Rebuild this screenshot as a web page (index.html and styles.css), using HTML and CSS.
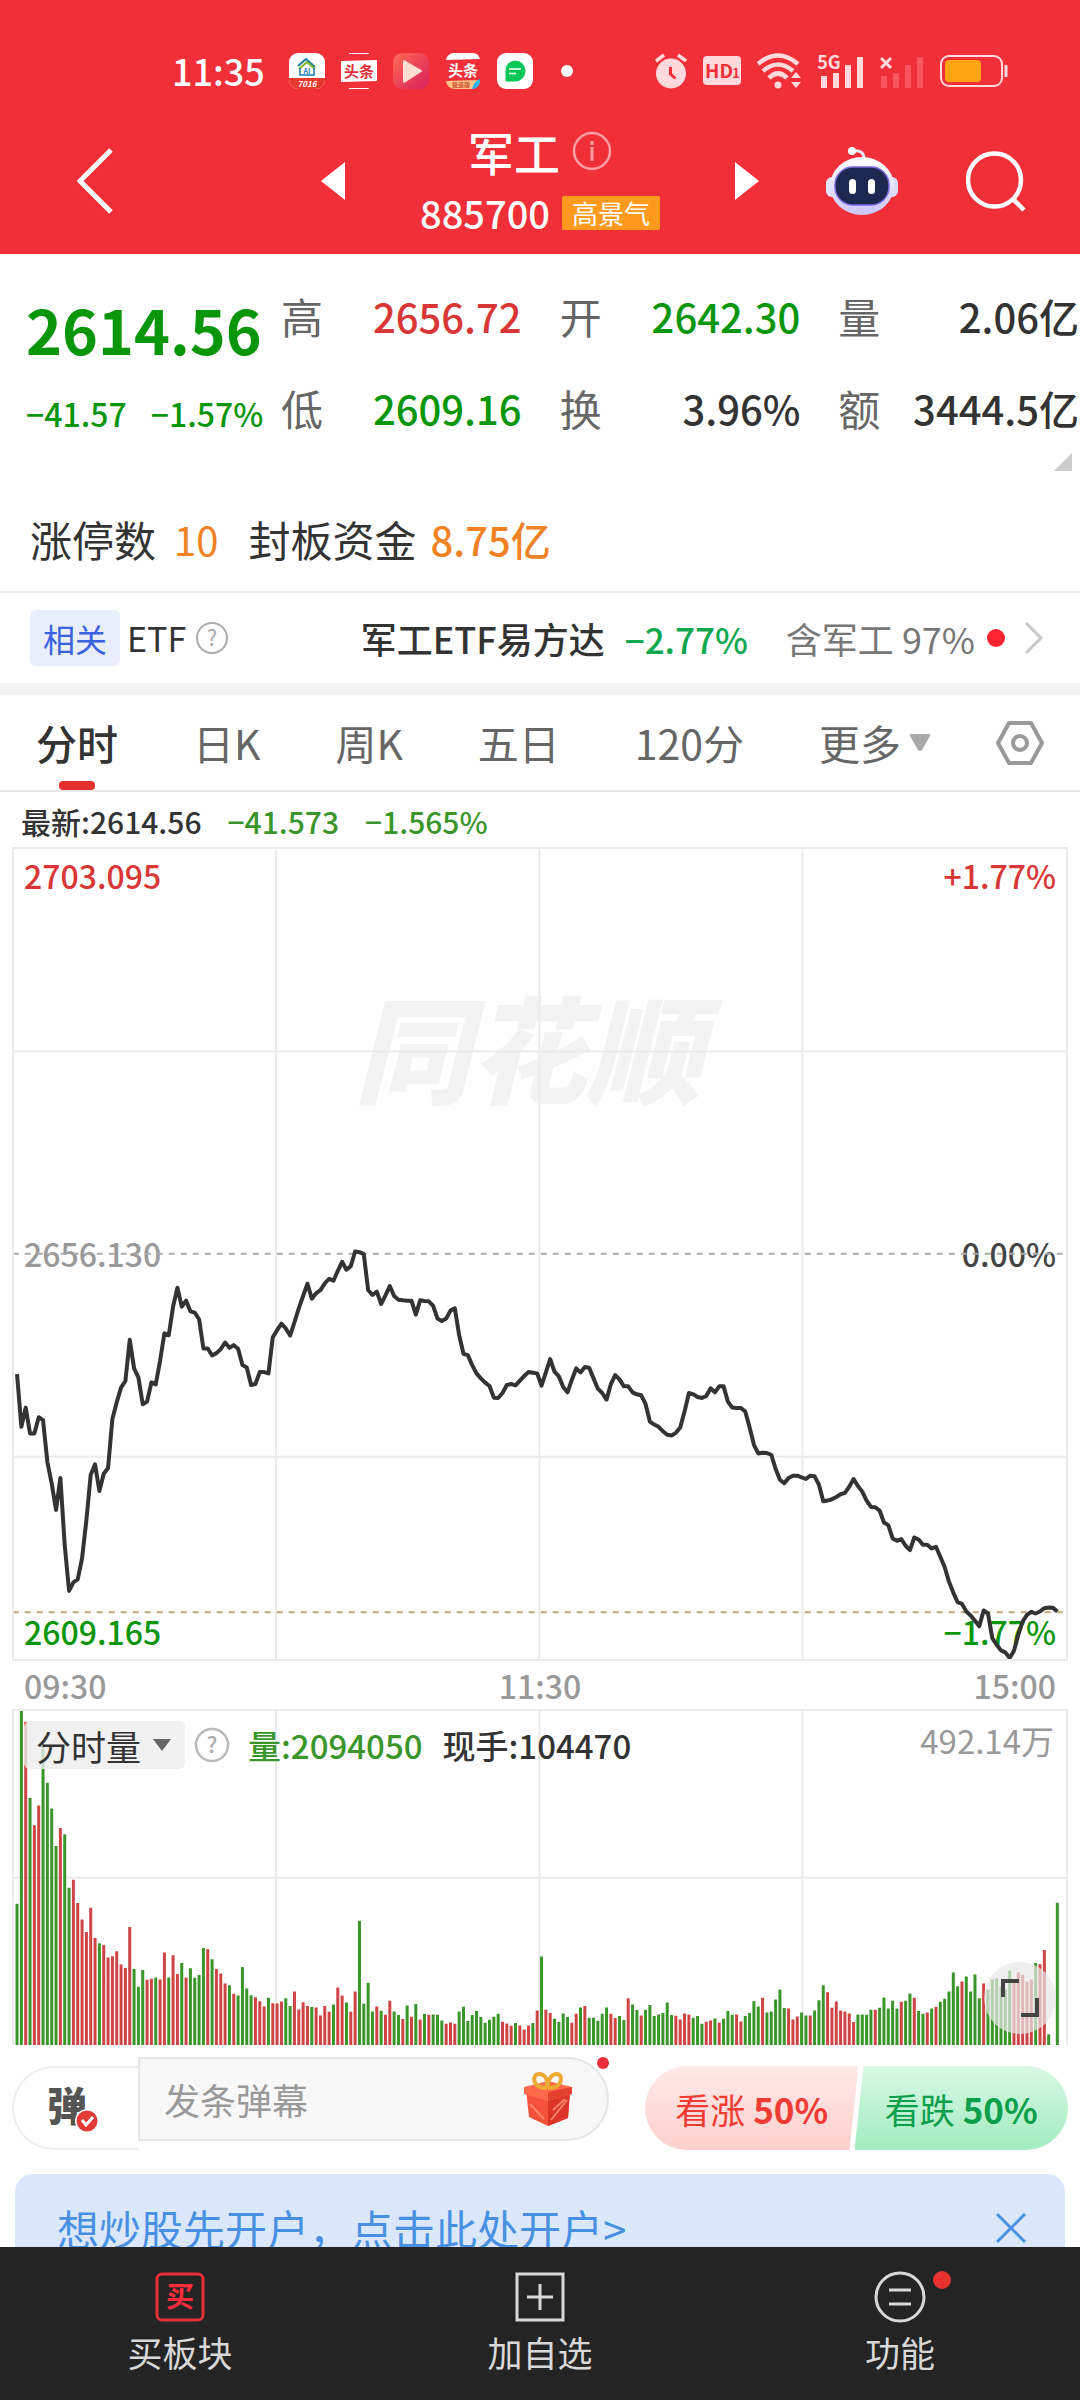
FILE: index.html
```
<!DOCTYPE html>
<html lang="zh-CN">
<head>
    <meta charset="utf-8">
    <meta name="viewport" content="width=device-width, initial-scale=1">
    <title>军工 885700</title>
    <link rel="stylesheet" href="styles.css">
</head>
<body>
    <header class="header">
        <div class="status-bar">
            <span class="clock">11:35</span>
            <div class="status-apps">
                <svg class="app-icon" viewBox="0 0 36 36">
                    <rect width="36" height="36" rx="9" fill="#fff"/>
                    <path d="M0 25h36v2a9 9 0 0 1-9 9H9a9 9 0 0 1-9-9z" fill="#e8392f"/>
                    <path d="M9 13l8-7 9 8" fill="none" stroke="#1b7f9c" stroke-width="2"/>
                    <path d="M10 16l8-7 8 7" fill="none" stroke="#7db52d" stroke-width="2"/>
                    <path d="M11 15v7h14v-7" fill="none" stroke="#1779b8" stroke-width="1.5"/>
                    <text x="18" y="21" class="app-text" font-size="7" fill="#1779b8">AI</text>
                    <text x="18" y="34" class="app-text" font-size="8" font-style="italic" fill="#fff">7016</text>
                </svg>
                <svg class="app-icon" viewBox="0 0 36 36">
                    <path d="M8 .5h20M8 35.500h20" stroke="#fff"/>
                    <path d="M0 8l36-1v21l-36 1z" fill="#fff"/>
                    <text x="18" y="24" class="app-text" font-size="15" fill="#e0313a">头条</text>
                </svg>
                <svg class="app-icon" viewBox="0 0 36 36">
                    <defs>
                        <linearGradient id="playBg" x1="0" y1="0" x2="1" y2="1">
                            <stop offset="0" stop-color="#ff6b55"/>
                            <stop offset="1" stop-color="#d81f5c"/>
                        </linearGradient>
                    </defs>
                    <rect width="36" height="36" rx="9" fill="url(#playBg)"/>
                    <path d="M11 8l17 10-17 11z" fill="#ffdcd0" stroke="#ffdcd0" stroke-width="2" stroke-linejoin="round"/>
                </svg>
                <svg class="app-icon" viewBox="0 0 36 36">
                    <path d="M1 7a8 8 0 0 1 8-7h18a8 8 0 0 1 8 6z" fill="#fff"/>
                    <path d="M1 28l34-1a9 9 0 0 1-8 9H9a9 9 0 0 1-8-8z" fill="#ffc48a"/>
                    <path d="M35 26v3a8 8 0 0 1-8 7c1-5 4-8 8-10z" fill="#2db4e8"/>
                    <text x="18" y="23" class="app-text" font-size="15" fill="#fff">头条</text>
                    <text x="16" y="34" class="app-text" font-size="6" fill="#c8502a">极速版</text>
                </svg>
                <svg class="app-icon" viewBox="0 0 36 36">
                    <rect width="36" height="36" rx="9" fill="#fff"/>
                    <path d="M18 7.500a10.500 10.500 0 1 1 0 21H8.500V18A10 10 0 0 1 18 7.500z" fill="#06c755"/>
                    <path d="M12 16h12M12 20.500h7" stroke="#fff" stroke-width="1.500"/>
                </svg>
                <span class="more-dot"></span>
            </div>
            <div class="status-system">
                <svg width="32" height="36" viewBox="0 0 32 36">
                    <circle cx="16" cy="20.500" r="15" fill="#ffd9db"/>
                    <path d="M1 8l8-6M31 8l-8-6" stroke="#ffd9db" stroke-width="3.500"/>
                    <path d="M15.500 14v7l5 4.500" fill="none" stroke="#f12f38" stroke-width="3"/>
                </svg>
                <svg width="38" height="30" viewBox="0 0 38 30">
                    <rect width="38" height="29" rx="4" fill="#ffd9db"/>
                    <text x="16" y="22" class="app-text" font-size="19" fill="#f12f38">HD</text>
                    <text x="33" y="22" class="app-text" font-size="13" fill="#f12f38">1</text>
                </svg>
                <svg width="44" height="36" viewBox="0 0 44 36">
                    <g fill="none" stroke="#ffd9db" stroke-width="4.500">
                        <path d="M1 11q20-17 40 0"/>
                        <path d="M6 18q15-13 30 0"/>
                        <path d="M12 25q9-9 18 0"/>
                    </g>
                    <circle cx="21" cy="32" r="3.500" fill="#ffd9db"/>
                    <path d="M34 25l5-6 5 6zM34 29l5 6 5-6z" fill="#ffd9db"/>
                </svg>
                <svg class="signal" width="47" height="36" viewBox="0 0 47 36">
                    <text x="12" y="16" class="app-text" font-size="18" fill="#ffd9db">5G</text>
                    <path d="M7 35V23M19 35V20M31 35V12M43 35V4" stroke="#ffd9db" stroke-width="6"/>
                </svg>
                <svg width="44" height="36" viewBox="0 0 44 36">
                    <path d="M1 5l10 10M11 5l-10 10" stroke="#ffd9db" stroke-width="3"/>
                    <path d="M4 35V23M16 35V20M28 35V12M40 35V4" stroke="#f8565f" stroke-width="6"/>
                </svg>
                <svg width="68" height="34" viewBox="0 0 68 34">
                    <rect x="1" y="2" width="61" height="30" rx="8" fill="none" stroke="#ffd9db" stroke-width="2"/>
                    <rect x="5" y="6" width="36" height="22" rx="4" fill="#ffa412"/>
                    <path d="M66 11v12" stroke="#ffd9db" stroke-width="3"/>
                </svg>
            </div>
        </div>
        <div class="title-bar">
            <div class="title-side">
                <button class="icon-btn" aria-label="返回">
                    <svg width="36" height="66" viewBox="0 0 36 66"><path d="M34 2L3 33l31 31" fill="none" stroke="#fff" stroke-width="5"/></svg>
                </button>
                <button class="icon-btn" aria-label="上一个">
                    <svg width="24" height="38" viewBox="0 0 24 38"><path d="M24 0v38L0 19z" fill="#fff"/></svg>
                </button>
            </div>
            <div class="title-center">
                <div class="title-name">
                    <h1>军工</h1>
                    <svg width="40" height="40" viewBox="0 0 40 40">
                        <circle cx="20" cy="20" r="18" fill="none" stroke="#ff9da2" stroke-width="2.500"/>
                        <path d="M20 16v14M20 10v4" stroke="#ff9da2" stroke-width="3"/>
                    </svg>
                </div>
                <div class="title-code">
                    <span>885700</span>
                    <span class="hot-tag">高景气</span>
                </div>
            </div>
            <div class="title-side">
                <button class="icon-btn" aria-label="下一个">
                    <svg width="24" height="38" viewBox="0 0 24 38"><path d="M0 0v38l24-19z" fill="#fff"/></svg>
                </button>
                <button class="icon-btn" aria-label="智能助手">
                    <svg width="72" height="70" viewBox="0 0 72 70">
                        <defs>
                            <linearGradient id="botShell" x1="0" y1="0" x2="0" y2="1">
                                <stop offset="0" stop-color="#fff"/>
                                <stop offset="1" stop-color="#c9c6fa"/>
                            </linearGradient>
                        </defs>
                        <path d="M26 5q12-2 12 8" fill="none" stroke="#efeaff" stroke-width="3"/>
                        <circle cx="26" cy="5" r="4" fill="#fff"/>
                        <rect x="0" y="31" width="12" height="20" rx="6" fill="#e4e4fb"/>
                        <rect x="60" y="31" width="12" height="20" rx="6" fill="#dcdcfa"/>
                        <ellipse cx="36" cy="40" rx="32" ry="29" fill="url(#botShell)"/>
                        <rect x="9" y="21" width="54" height="38" rx="18" fill="#1c2850" stroke="#7b6ae0" stroke-width="1.500"/>
                        <rect x="23" y="33" width="7" height="15" rx="3.500" fill="#fff"/>
                        <rect x="42" y="33" width="7" height="15" rx="3.500" fill="#fff"/>
                    </svg>
                </button>
                <button class="icon-btn" aria-label="搜索">
                    <svg width="60" height="62" viewBox="0 0 60 62">
                        <circle cx="28.500" cy="30" r="26.500" fill="none" stroke="#fff" stroke-width="4.500"/>
                        <path d="M47 49l11 11" stroke="#fff" stroke-width="4.500"/>
                    </svg>
                </button>
            </div>
        </div>
    </header>

    <main class="content">
        <section class="quote">
            <div class="price down">
                <div class="price-now">2614.56</div>
                <div class="price-change"><span>−41.57</span><span>−1.57%</span></div>
            </div>
            <dl class="stats">
                <div class="stat"><dt>高</dt><dd class="up">2656.72</dd></div>
                <div class="stat"><dt>开</dt><dd class="down">2642.30</dd></div>
                <div class="stat"><dt>量</dt><dd>2.06亿</dd></div>
                <div class="stat"><dt>低</dt><dd class="down">2609.16</dd></div>
                <div class="stat"><dt>换</dt><dd>3.96%</dd></div>
                <div class="stat"><dt>额</dt><dd>3444.5亿</dd></div>
            </dl>
        </section>
        <div class="expand-corner">
            <svg width="18" height="18" viewBox="0 0 18 18"><path d="M18 0v18H0z" fill="#ccc"/></svg>
        </div>

        <section class="limit-row">
            <span>涨停数</span><span class="orange">10</span>
            <span class="limit-label">封板资金</span><b class="orange">8.75亿</b>
        </section>

        <a class="etf-row" href="#etf">
            <span class="etf-tag">相关</span>
            <span class="etf-label">ETF</span>
            <svg width="34" height="34" viewBox="0 0 34 34">
                <circle cx="17" cy="17" r="15" fill="none" stroke="#aaa" stroke-width="2"/>
                <text x="17" y="25" class="help-mark">?</text>
            </svg>
            <span class="etf-name">军工ETF易方达</span>
            <span class="etf-change">−2.77%</span>
            <span class="etf-share">含军工 97%</span>
            <span class="red-dot"></span>
            <svg class="etf-arrow" width="20" height="34" viewBox="0 0 20 34"><path d="M2 2l15 15L2 32" fill="none" stroke="#c8c8c8" stroke-width="3"/></svg>
        </a>

        <nav class="tabs">
            <button class="tab active">分时</button>
            <button class="tab">日K</button>
            <button class="tab">周K</button>
            <button class="tab">五日</button>
            <button class="tab">120分</button>
            <button class="tab tab-more">更多
                <svg width="22" height="20" viewBox="0 0 22 20"><path d="M2 1h18q2 0 1 2l-8 14q-2 2-4 0L1 3q-1-2 1-2z" fill="#aaa"/></svg>
            </button>
            <button class="tab" aria-label="设置">
                <svg width="48" height="46" viewBox="0 0 48 46">
                    <path d="M13 3h22l11 20-11 20H13L2 23z" fill="none" stroke="#999" stroke-width="4" stroke-linejoin="round"/>
                    <circle cx="24" cy="23" r="7" fill="none" stroke="#999" stroke-width="4"/>
                </svg>
            </button>
        </nav>

        <div class="latest">
            <span>最新:2614.56</span>
            <span class="green">−41.573</span>
            <span class="green">−1.565%</span>
        </div>

        <section class="price-chart">
            <div class="watermark">同花顺</div>
            <div class="axis-labels">
                <div><span class="up">2703.095</span><span class="up">+1.77%</span></div>
                <div><span class="muted">2656.130</span><span class="flat">0.00%</span></div>
                <div><span class="down">2609.165</span><span class="down">−1.77%</span></div>
            </div>
            <svg class="plot" id="pricePlot" viewBox="-0.7 -1056 242.700 2439" preserveAspectRatio="none">
                <g class="grid">
                    <path d="M59.750-1056V1383M120.500-1056V1383M181.250-1056V1383"/>
                    <path d="M-1-446H242M-1 774H242"/>
                </g>
                <path class="dash" d="M-1 163H242"/>
                <path class="dash dash-last" d="M-1 1242H242"/>
            </svg>
        </section>
        <div class="time-axis"><span>09:30</span><span>11:30</span><span>15:00</span></div>

        <section class="volume-chart">
            <svg class="plot" id="volumePlot" viewBox="-0.7 0 242.700 1005" preserveAspectRatio="none">
                <g class="grid">
                    <path d="M59.750 0V1005M120.500 0V1005M181.250 0V1005M-1 502H242"/>
                </g>
            </svg>
            <div class="volume-bar">
                <button class="volume-pick">分时量
                    <svg width="18" height="12" viewBox="0 0 18 12"><path d="M0 0h18l-9 12z" fill="#666"/></svg>
                </button>
                <svg width="36" height="36" viewBox="0 0 36 36">
                    <circle cx="18" cy="18" r="16" fill="none" stroke="#bbb" stroke-width="2.500"/>
                    <text x="18" y="26" class="help-mark">?</text>
                </svg>
                <span class="green">量:2094050</span>
                <span>现手:104470</span>
                <span class="volume-max">492.14万</span>
            </div>
            <button class="fullscreen" aria-label="全屏">
                <svg width="38" height="38" viewBox="0 0 38 38"><path d="M2 18V2h16M36 19v17H20" fill="none" stroke="#444" stroke-width="4"/></svg>
            </button>
        </section>

        <section class="actions">
            <button class="danmu-toggle" aria-label="弹幕开关">
                <svg width="56" height="56" viewBox="0 0 56 56">
                    <text x="21" y="41" class="danmu-char">弹</text>
                    <circle cx="41" cy="41" r="12" fill="#fff"/>
                    <circle cx="41" cy="41" r="10.500" fill="#e23b38"/>
                    <path d="M36 40l4 5 7-8" fill="none" stroke="#fff" stroke-width="3"/>
                </svg>
            </button>
            <div class="danmu-box">
                <input class="danmu-input" type="text" placeholder="发条弹幕" aria-label="发条弹幕">
                <svg width="50" height="54" viewBox="0 0 50 54">
                    <path d="M3 17l22-4 22 4-2 29-20 8-19-9z" fill="#f4523b"/>
                    <path d="M25 25v29l20-8 2-25z" fill="#dc3427"/>
                    <path d="M1 15l24-6 24 6v7l-24 7-24-7z" fill="#ff6a4d"/>
                    <path d="M25 20l24-5v7l-24 7z" fill="#e5402e"/>
                    <path d="M7 32l14 15M28 48l16-20M30 38l12-11" stroke="#ff846a" stroke-width="2"/>
                    <path d="M24 16C8 16 9 2 16 2s9 7 8 14M25 16c16 0 15-14 9-14s-10 7-9 14" fill="none" stroke="#ecaa35" stroke-width="4"/>
                </svg>
                <span class="danmu-dot"></span>
            </div>
            <div class="vote">
                <button class="vote-btn vote-up">看涨 <b>50%</b></button>
                <button class="vote-btn vote-down">看跌 <b>50%</b></button>
            </div>
        </section>

        <div class="banner">
            <a href="#open">想炒股先开户，点击此处开户&gt;</a>
            <button class="icon-btn" aria-label="关闭">
                <svg width="32" height="32" viewBox="0 0 32 32"><path d="M2 2l28 28M30 2L2 30" stroke="#4a90e2" stroke-width="3"/></svg>
            </button>
        </div>
    </main>

    <nav class="bottom-nav">
        <a href="#buy">
            <svg width="50" height="50" viewBox="0 0 50 50">
                <rect x="2" y="2" width="46" height="46" rx="5" fill="none" stroke="#e5303a" stroke-width="3"/>
                <text x="25" y="35" class="buy-char">买</text>
            </svg>
            买板块
        </a>
        <a href="#add">
            <svg width="50" height="50" viewBox="0 0 50 50">
                <rect x="2" y="2" width="46" height="46" fill="none" stroke="#d8d8d8" stroke-width="3"/>
                <path d="M12 25h26M25 12v26" stroke="#d8d8d8" stroke-width="3"/>
            </svg>
            加自选
        </a>
        <a href="#more">
            <svg class="with-dot" width="50" height="50" viewBox="0 0 50 50">
                <circle cx="25" cy="25" r="24" fill="none" stroke="#d8d8d8" stroke-width="3"/>
                <path d="M14 18h22M14 32h22" stroke="#d8d8d8" stroke-width="3"/>
                <circle cx="67" cy="8" r="9" fill="#e5322f"/>
            </svg>
            功能
        </a>
    </nav>

    <script src="chart.js"></script>
</body>
</html>
```

FILE: styles.css
```
* {
    margin: 0;
    padding: 0;
    box-sizing: border-box;
}

body {
    display: flex;
    flex-direction: column;
    height: 100vh;
    font-family: "Noto Sans CJK SC", "Noto Sans", sans-serif;
    font-size: 34px;
    line-height: 1;
    color: #333;
    background: #fff;
}

button {
    border: none;
    background: none;
    font: inherit;
    color: inherit;
    cursor: pointer;
}

a {
    color: inherit;
    text-decoration: none;
}

svg {
    display: block;
    flex: none;
}

.up {
    color: #d93636;
}

.down {
    color: #0a960a;
}

.green {
    color: #3a962a;
}

.orange {
    color: #f08226;
}

.muted {
    color: #999;
}

.flat {
    color: #444;
}

/* header */

.header {
    flex: none;
    background: #f12f38;
    color: #fff;
}

.status-bar {
    display: flex;
    align-items: center;
    height: 108px;
    padding: 34px 72px 0 172px;
}

.clock {
    padding-bottom: 2px;
    font-size: 36px;
    font-weight: 500;
}

.status-apps {
    display: flex;
    align-items: center;
    gap: 16px;
    margin-left: 24px;
}

.app-icon {
    width: 36px;
    height: 36px;
}

.app-text {
    font-weight: 700;
    text-anchor: middle;
}

.more-dot {
    width: 12px;
    height: 12px;
    margin-left: 12px;
    border-radius: 50%;
    background: #fff;
}

.status-system {
    display: flex;
    align-items: center;
    gap: 16px;
    margin-left: auto;
}

.signal {
    overflow: visible;
}

.title-bar {
    display: grid;
    grid-template-columns: 1fr auto 1fr;
    gap: 75px;
    height: 146px;
}

.title-side {
    display: flex;
    align-items: center;
    justify-content: space-between;
}

.title-side:first-child {
    padding-left: 77px;
}

.title-side:last-child {
    padding-right: 54px;
}

.icon-btn {
    display: flex;
}

.title-center {
    display: flex;
    flex-direction: column;
    align-items: center;
    gap: 20px;
    padding-top: 20px;
}

.title-name {
    display: flex;
    align-items: center;
    gap: 12px;
}

.title-name h1 {
    font-size: 46px;
    font-weight: 500;
}

.title-code {
    display: flex;
    align-items: center;
    gap: 12px;
    font-size: 38px;
    font-weight: 500;
}

.hot-tag {
    padding: 4px 10px;
    border-radius: 2px;
    background: #ff9a1e;
    font-size: 26px;
    font-weight: 400;
}

/* quote */

.content {
    flex: 1;
    min-height: 0;
    overflow: hidden;
}

.quote {
    display: grid;
    grid-template-columns: 255px 1fr;
    padding: 41px 1px 0 26px;
}

.price {
    white-space: nowrap;
}

.price-now {
    font-size: 61px;
    font-weight: 700;
    line-height: 68px;
}

.price-change {
    display: flex;
    gap: 24px;
    margin-top: 34px;
    font-size: 32px;
    font-weight: 500;
}

.stats {
    display: grid;
    grid-template-columns: repeat(3, 1fr);
    gap: 50px 38px;
}

.stat {
    display: flex;
    align-items: center;
    justify-content: space-between;
}

.stat dt {
    font-size: 42px;
    color: #666;
}

.stat dd {
    font-size: 40px;
    font-weight: 500;
    white-space: nowrap;
}

.expand-corner {
    display: flex;
    justify-content: flex-end;
    padding: 24px 8px 0;
}

.limit-row {
    display: flex;
    align-items: center;
    gap: 18px;
    height: 122px;
    padding: 15px 30px 0;
    font-size: 42px;
    border-bottom: 2px solid #eee;
}

.limit-label {
    margin-left: 12px;
}

.limit-row .orange {
    font-size: 40px;
}

.limit-row b {
    margin-left: -4px;
    font-weight: 500;
}

.etf-row {
    display: flex;
    align-items: center;
    height: 102px;
    padding: 0 36px 0 30px;
    border-bottom: 12px solid #f4f4f4;
}

.etf-tag {
    padding: 12px 13px;
    border-radius: 6px;
    background: #e8eefc;
    font-size: 32px;
    color: #3a62e0;
}

.etf-label {
    margin: 0 9px 0 7px;
}

.help-mark {
    font-size: 22px;
    fill: #aaa;
    text-anchor: middle;
}

.etf-name {
    margin-left: auto;
    font-size: 36px;
    font-weight: 500;
}

.etf-change {
    margin: 0 38px 0 20px;
    font-size: 35px;
    font-weight: 500;
    color: #10a84e;
}

.etf-share {
    font-size: 36px;
    color: #777;
}

.red-dot {
    width: 18px;
    height: 18px;
    margin: 0 19px 0 12px;
    border-radius: 50%;
    background: #fc2433;
}

/* tabs */

.tabs {
    display: flex;
    align-items: center;
    justify-content: space-between;
    height: 97px;
    padding: 0 36px;
    border-bottom: 2px solid #e8e8e8;
}

.tab {
    position: relative;
    display: flex;
    align-items: center;
    height: 95px;
    font-size: 41px;
    color: #666;
}

.tab.active {
    font-weight: 500;
    color: #333;
}

.tab.active::after {
    content: "";
    position: absolute;
    left: 50%;
    bottom: 0;
    width: 36px;
    height: 9px;
    margin-left: -18px;
    border-radius: 4px;
    background: #e5302f;
}

.tab-more {
    gap: 8px;
    margin-right: -10px;
}

/* charts */

.latest {
    display: flex;
    align-items: center;
    gap: 26px;
    height: 55px;
    padding: 2px 21px 0;
    font-size: 30px;
    font-weight: 500;
}

.price-chart,
.volume-chart {
    position: relative;
    margin: 0 12px;
    border: 2px solid #ebebeb;
}

.price-chart {
    height: 814px;
}

.volume-chart {
    height: 336px;
    border-bottom: none;
}

.plot {
    position: relative;
    width: 100%;
    height: 100%;
}

.plot path,
.plot polyline {
    fill: none;
    vector-effect: non-scaling-stroke;
}

.grid {
    stroke: #ebebeb;
    stroke-width: 2px;
}

.dash {
    stroke: #aaa;
    stroke-width: 2px;
    stroke-dasharray: 6 6;
}

.dash-last {
    stroke: #bfa77a;
}

.price-line {
    stroke: #333;
    stroke-width: 4px;
    stroke-linejoin: round;
}

.plot .bars-up {
    stroke: #cf4444;
    stroke-width: 3px;
}

.plot .bars-down {
    stroke: #3a962a;
    stroke-width: 3px;
}

.watermark {
    position: absolute;
    top: 25%;
    left: 0;
    right: 0;
    margin-top: -66px;
    padding-right: 24px;
    font-size: 116px;
    font-weight: 900;
    font-style: italic;
    text-align: center;
    color: #f3f3f3;
}

.axis-labels {
    position: absolute;
    inset: 0;
    display: flex;
    flex-direction: column;
    justify-content: space-between;
    padding: 10px 10px 12px 10px;
    font-size: 32px;
    font-weight: 500;
}

.axis-labels div {
    display: flex;
    justify-content: space-between;
}

.time-axis {
    display: flex;
    align-items: center;
    justify-content: space-between;
    height: 48px;
    padding: 0 24px;
    font-size: 32px;
    font-weight: 500;
    color: #999;
}

.volume-bar {
    position: absolute;
    top: 10px;
    left: 10px;
    right: 12px;
    display: flex;
    align-items: center;
    font-size: 33px;
    font-weight: 500;
}

.volume-pick {
    display: flex;
    align-items: center;
    gap: 12px;
    height: 48px;
    padding: 0 14px 0 12px;
    border-radius: 6px;
    background: rgba(238, 238, 238, 0.8);
    font-size: 35px;
    font-weight: 400;
}

.volume-pick + svg {
    margin: 0 18px 0 9px;
}

.volume-bar .green {
    margin-right: 20px;
}

.volume-max {
    margin-left: auto;
    padding-bottom: 10px;
    font-weight: 400;
    color: #999;
}

.fullscreen {
    position: absolute;
    right: 10px;
    bottom: 11px;
    display: grid;
    place-items: center;
    width: 72px;
    height: 72px;
    border-radius: 50%;
    background: rgba(232, 232, 232, 0.7);
}

/* actions */

.actions {
    display: flex;
    align-items: flex-start;
    padding: 12px 12px 24px;
}

.danmu-toggle {
    flex: none;
    display: flex;
    align-items: center;
    width: 126px;
    height: 84px;
    margin-top: 9px;
    padding-left: 32px;
    border: 2px solid #eee;
    border-right: none;
    border-radius: 42px 0 0 42px;
}

.danmu-char {
    font-size: 40px;
    font-weight: 900;
    fill: #555;
    text-anchor: middle;
}

.danmu-box {
    position: relative;
    flex: 1;
    display: flex;
    align-items: center;
    min-width: 0;
    height: 84px;
    margin-right: 36px;
    padding: 0 34px 0 24px;
    border: 2px solid #e6e6e6;
    border-radius: 0 42px 42px 0;
    background: #f8f8f8;
}

.danmu-input {
    flex: 1;
    min-width: 0;
    border: none;
    outline: none;
    background: none;
    font: inherit;
    font-size: 36px;
}

.danmu-input::placeholder {
    color: #999;
}

.danmu-dot {
    position: absolute;
    top: -2px;
    right: -2px;
    width: 12px;
    height: 12px;
    border-radius: 50%;
    background: #e9303a;
}

.vote {
    flex: none;
    display: flex;
    width: 423px;
    margin-top: 9px;
}

.vote-btn {
    flex: 1;
    height: 84px;
    font-size: 35px;
    white-space: nowrap;
}

.vote-up {
    margin-right: -4px;
    border-radius: 42px 0 0 42px;
    background: linear-gradient(#ffeaea, #fdd0cc);
    color: #f03a34;
    clip-path: polygon(0 0, 100% 0, calc(100% - 9px) 100%, 0 100%);
}

.vote-down {
    border-radius: 0 42px 42px 0;
    background: linear-gradient(#daf8e6, #a2ecc0);
    color: #0c9f4b;
    clip-path: polygon(9px 0, 100% 0, 100% 100%, 0 100%);
}

.banner {
    display: flex;
    align-items: center;
    justify-content: space-between;
    height: 108px;
    margin: 0 15px;
    padding: 0 38px 0 42px;
    border-radius: 18px;
    background: #dbe8fb;
    font-size: 42px;
    color: #4a90e2;
}

/* bottom nav */

.bottom-nav {
    flex: none;
    display: grid;
    grid-template-columns: repeat(3, 1fr);
    height: 153px;
    background: #242424;
    color: #d8d8d8;
}

.bottom-nav a {
    display: flex;
    flex-direction: column;
    align-items: center;
    gap: 12px;
    padding-top: 25px;
    font-size: 35px;
}

.with-dot {
    overflow: visible;
}

.buy-char {
    font-size: 28px;
    font-weight: 700;
    fill: #ff2d3c;
    text-anchor: middle;
}
```

FILE: chart.js
```
// 每分钟价格在图中的高度，09:30 - 15:00
const prices = [
    525, 684, 626, 704, 704, 655, 664, 790, 855, 934, 838, 1040, 1178, 1152, 1143, 1080, 965, 828, 797, 877,
    825, 808, 660, 610, 566, 546, 422, 508, 535, 616, 608, 550, 556, 485, 402, 408, 322, 265, 322, 304,
    336, 340, 360, 448, 448, 469, 462, 450, 430, 446, 438, 449, 498, 505, 558, 555, 519, 519, 523, 414,
    393, 373, 388, 409, 369, 327, 290, 253, 298, 282, 272, 252, 238, 244, 214, 187, 211, 200, 156, 158,
    164, 272, 287, 277, 314, 288, 260, 290, 301, 303, 304, 304, 346, 303, 305, 306, 320, 358, 365, 358,
    334, 327, 408, 464, 468, 498, 523, 538, 551, 561, 596, 597, 582, 558, 555, 559, 545, 531, 519, 521,
    523, 560, 520, 480, 518, 532, 564, 580, 542, 508, 520, 504, 506, 538, 569, 582, 602, 555, 528, 541,
    562, 562, 580, 586, 589, 615, 668, 677, 684, 697, 708, 710, 702, 686, 638, 582, 586, 594, 597, 591,
    568, 580, 562, 562, 608, 626, 627, 627, 638, 685, 738, 764, 762, 763, 768, 810, 843, 854, 838, 831,
    831, 836, 841, 831, 833, 858, 908, 906, 902, 895, 887, 883, 864, 841, 862, 879, 906, 925, 926, 936,
    972, 980, 1020, 1027, 1022, 1042, 1055, 1017, 1023, 1039, 1039, 1050, 1045, 1075, 1106, 1150, 1183, 1212, 1217, 1240,
    1252, 1268, 1284, 1237, 1246, 1320, 1340, 1357, 1363, 1380, 1358, 1310, 1270, 1250, 1241, 1246, 1240, 1230, 1228, 1229,
    1240
];

// 每分钟成交量，r 涨 g 跌
const volumes = `
    425g 1005g 973r 743g 661r 721r 900g 789g 712g 599g 653r 634g 473g 497r 427r 378r 340r 413r 322r 306g
    301r 263r 267r 282r 242r 232r 355r 229g 175g 226g 196r 199r 203g 197r 278r 203g 270r 214r 247g 203r
    231g 202g 211g 292g 288r 258g 229r 215r 185r 180g 154r 149g 235g 170g 150g 144r 132r 116r 142g 126r
    125r 131r 141g 117g 161r 107r 129r 117r 114g 113r 89r 117r 100r 122g 173r 149r 128g 100r 161r 374g
    124g 187g 101g 116r 103g 91r 133r 101g 90g 78r 119g 85r 123g 77r 93g 91r 92g 91g 74g 64r
    68r 64r 101g 115g 72g 90g 102g 84g 67g 76g 85g 94g 70r 65r 58r 66g 59r 47r 59r 66g
    104r 266g 106r 96r 79g 69g 95g 84g 67r 94r 113g 117r 82g 82g 73g 94g 113g 94r 81r 87g
    75g 141r 122g 105g 89r 106g 120g 87g 92g 96g 128g 90g 88r 77r 95r 92r 82g 87g 64g 70r
    74r 80g 67r 79g 102g 91g 92r 71r 87g 96g 132g 116g 142r 98g 101g 137g 167g 111g 110r 77r
    86r 98g 89g 89r 104g 135g 180g 159r 112r 131r 104r 101r 95r 69r 92g 92g 91g 106g 106r 112g
    143g 110g 133g 110g 130r 133g 155g 142r 102g 94g 98r 110g 115r 130g 139g 161g 218g 177g 191r 206g
    161g 212g 141g 185r 167g 197g 200g 177g 167g 224g 197r 218r 211r 191r 197r 247g 243r 286r 32g 0g
    428g
`.trim().split(/\s+/);

const SVG_NS = 'http://www.w3.org/2000/svg';

function addShape(parentId, tag, attrs) {
    const el = document.createElementNS(SVG_NS, tag);
    Object.entries(attrs).forEach(([name, value]) => el.setAttribute(name, value));
    document.getElementById(parentId).appendChild(el);
}

// 分时线
addShape('pricePlot', 'polyline', {
    class: 'price-line',
    points: prices.map((y, minute) => `${minute},${y}`).join(' ')
});

// 成交量柱
function barPath(kind) {
    return volumes
        .map((item, minute) => item.endsWith(kind) ? `M${minute} 1005v-${parseInt(item, 10)}` : '')
        .join('');
}

addShape('volumePlot', 'path', { class: 'bars-up', d: barPath('r') });
addShape('volumePlot', 'path', { class: 'bars-down', d: barPath('g') });
```
